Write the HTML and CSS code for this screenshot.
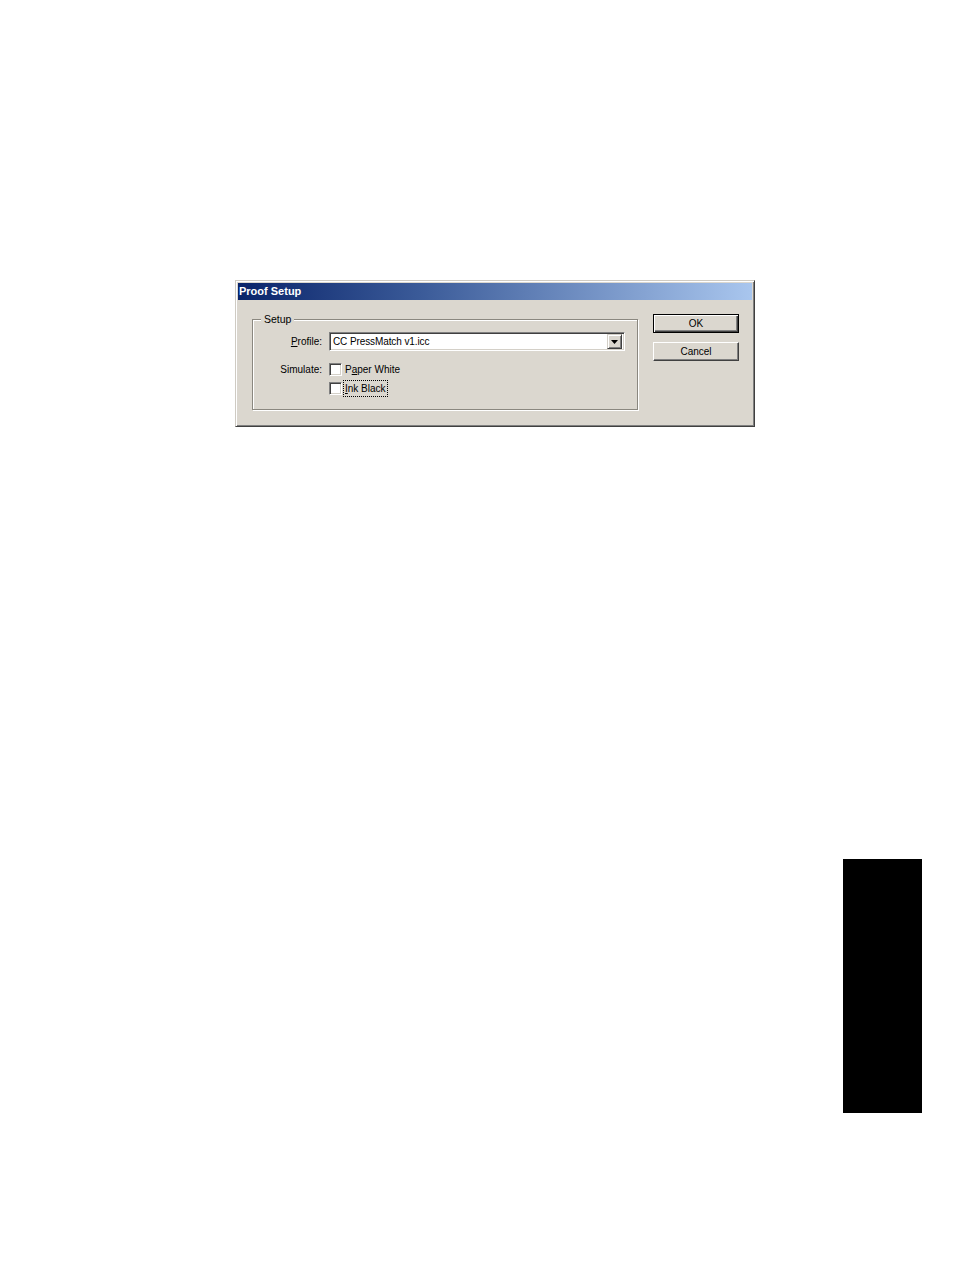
FILE: index.html
```html
<!DOCTYPE html>
<html>
<head>
<meta charset="utf-8">
<link rel="stylesheet" href="styles.css">
</head>
<body>
<div class="dialog">
  <div class="titlebar">Proof Setup</div>
  <div class="dbody">
    <fieldset class="group">
      <legend class="legend">Setup</legend>
      <div class="row">
        <span class="label"><u>P</u>rofile:</span>
        <div class="select">
          <span class="select-text">CC PressMatch v1.icc</span>
          <span class="drop">
            <svg width="7" height="4" viewBox="0 0 7 4"><path d="M0 0H7L3.5 4Z" fill="#000"/></svg>
          </span>
        </div>
      </div>
      <div class="row row-sim">
        <span class="label">Simulate:</span>
        <div class="checks">
          <div class="check"><span class="box"></span><span class="ctext">P<u>a</u>per White</span></div>
          <div class="check"><span class="box"></span><span class="ctext focus"><u>I</u>nk Black</span></div>
        </div>
      </div>
    </fieldset>
    <div class="buttons">
      <div class="btn btn-default"><span class="btn-in">OK</span></div>
      <div class="btn"><span class="btn-in">Cancel</span></div>
    </div>
  </div>
</div>
<div class="tab"></div>
</body>
</html>
```
FILE: styles.css
```css
html, body {
  margin: 0;
  padding: 0;
  background: #ffffff;
}
body {
  width: 954px;
  height: 1272px;
  overflow: hidden;
  font-family: "Liberation Sans", Arial, sans-serif;
  font-size: 10px;
  color: #000;
}
.dialog {
  margin: 280px 0 0 235px;
  width: 520px;
  height: 147px;
  box-sizing: border-box;
  background: #dbd7cf;
  border: 1px solid;
  border-color: #cfcbc3 #404040 #404040 #cfcbc3;
  box-shadow: inset 1px 1px 0 #ffffff, inset -1px -1px 0 #808080;
  padding: 2px;
}
.titlebar {
  height: 17px;
  line-height: 17px;
  padding-left: 1px;
  background: linear-gradient(to right, #0a246a 0%, #3a5a98 35%, #a9c6ee 100%);
  color: #ffffff;
  font-weight: bold;
  font-size: 11px;
}
.dbody {
  display: flex;
  align-items: flex-start;
  padding: 13px 0 0 14px;
}
.group {
  margin: 0;
  width: 385px;
  height: 97px;
  box-sizing: border-box;
  padding: 7px 12px 0 0;
  border: 1px solid #8a877f;
  box-shadow: inset 1px 1px 0 #ffffff, 1px 1px 0 #ffffff;
}
.legend {
  margin-left: 8px;
  padding: 0 3px;
  line-height: 12px;
  font-size: 10.5px;
  background: #dbd7cf;
}
.row {
  display: flex;
  align-items: center;
}
.label {
  width: 69px;
  flex: none;
  text-align: right;
  margin-right: 7px;
  font-size: 10px;
}
.select {
  width: 296px;
  height: 19px;
  box-sizing: border-box;
  background: #ffffff;
  border: 1px solid;
  border-color: #808080 #ffffff #ffffff #808080;
  box-shadow: inset 1px 1px 0 #404040, inset -1px -1px 0 #d4d0c8;
  display: flex;
  align-items: center;
  justify-content: space-between;
  padding: 0 2px 0 3px;
}
.select-text {
  font-size: 10px;
  letter-spacing: -0.1px;
}
.drop {
  width: 15px;
  height: 15px;
  box-sizing: border-box;
  background: #dbd7cf;
  border: 1px solid;
  border-color: #d4d0c8 #404040 #404040 #d4d0c8;
  box-shadow: inset 1px 1px 0 #ffffff, inset -1px -1px 0 #808080;
  display: flex;
  align-items: center;
  justify-content: center;
}
.row-sim {
  align-items: flex-start;
  margin-top: 12px;
}
.row-sim .label {
  margin-top: 1px;
}
.checks {
  display: flex;
  flex-direction: column;
  gap: 6px;
}
.check {
  display: flex;
  align-items: center;
  height: 13px;
}
.box {
  width: 13px;
  height: 13px;
  box-sizing: border-box;
  background: #ffffff;
  border: 1px solid;
  border-color: #808080 #ffffff #ffffff #808080;
  box-shadow: inset 1px 1px 0 #404040, inset -1px -1px 0 #d4d0c8;
  margin-right: 3px;
}
.ctext {
  font-size: 10px;
  line-height: 13px;
}
.focus {
  outline: 1px dotted #000;
  outline-offset: 1px;
}
.buttons {
  display: flex;
  flex-direction: column;
  gap: 9px;
  margin-left: 15px;
  margin-top: 1px;
}
.btn {
  width: 86px;
  height: 19px;
  box-sizing: border-box;
  border: 1px solid;
  border-color: #ffffff #404040 #404040 #ffffff;
  box-shadow: inset -1px -1px 0 #808080;
  display: flex;
  align-items: center;
  justify-content: center;
}
.btn-default {
  border: 1px solid #000;
  box-shadow: inset 1px 1px 0 #ffffff, inset -1px -1px 0 #404040, inset -2px -2px 0 #808080;
}
.btn-in {
  font-size: 10px;
}
.tab {
  margin: 432px 0 0 843px;
  width: 79px;
  height: 254px;
  background: #000000;
}
```
